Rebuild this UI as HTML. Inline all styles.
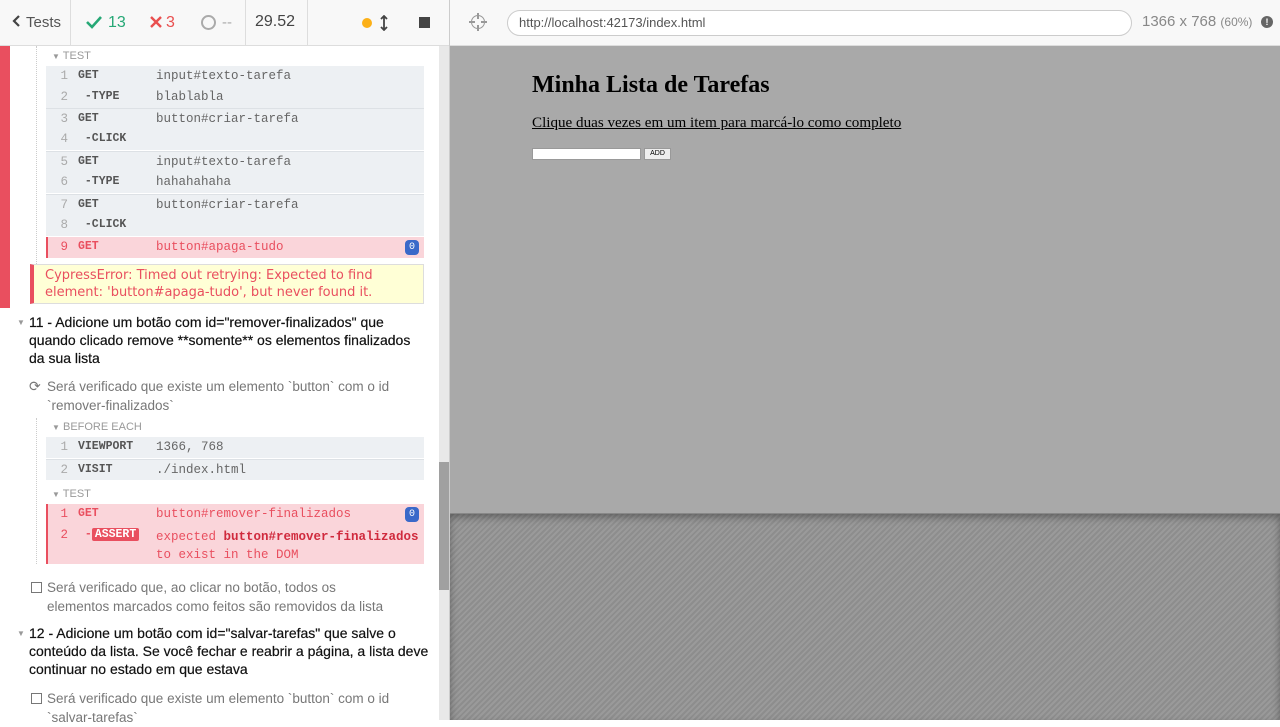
<!DOCTYPE html>
<html><head><meta charset="utf-8"><style>
*{box-sizing:border-box;margin:0;padding:0}
body{width:1280px;height:720px;overflow:hidden;font-family:"Liberation Sans",sans-serif;background:#fff;position:relative}
.abs{position:absolute}
.hdr{left:0;top:0;width:450px;height:46px;background:#f8f8f8;border-bottom:1px solid #ddd;}
.sep{position:absolute;top:0;width:1px;height:46px;background:#ddd}
.mono{font-family:"Liberation Mono","DejaVu Sans Mono",monospace;font-size:12.5px}
.row{position:absolute;left:46px;width:378px;height:21px;background:#edf0f3}
.row .n{position:absolute;left:0;width:22px;text-align:right;top:3px;color:#aaa}
.row .c{position:absolute;left:32px;top:3px;font-weight:bold;color:#555;font-size:11.5px}
.row .v{position:absolute;left:110px;top:3px;color:#666}
.bdr{border-top:1px solid #dde1e5}
.red{background:#fad5da;box-shadow:inset 2px 0 0 #e94f5f}
.red .n,.red .c,.red .v{color:#e94f5f}
.badge{position:absolute;right:5px;top:3px;width:14px;height:15px;border-radius:4px;background:#3a69c9;color:#fff;font-size:10px;text-align:center;line-height:15px}
.lbl{position:absolute;font-size:11px;color:#999}
.t{position:absolute;font-size:14px;color:#111;line-height:18px;-webkit-text-stroke:0.2px #111;white-space:nowrap}
.s{position:absolute;font-size:13.5px;color:#777;line-height:19px;white-space:nowrap}
</style></head><body>
<div class="abs hdr">
 <div class="abs" style="left:12px;top:13px;font-size:16px;color:#555"><svg width="10" height="16" viewBox="0 0 10 16"><path d="M7 3 L2 8 L7 13" stroke="#444" stroke-width="2.2" fill="none"/></svg></div>
 <div class="abs" style="left:26px;top:14px;font-size:15px;color:#555">Tests</div>
 <div class="sep" style="left:70px"></div>
 <svg class="abs" style="left:86px;top:15px" width="16" height="14" viewBox="0 0 16 14"><path d="M1 7 L6 12 L15 2" stroke="#26a876" stroke-width="2.6" fill="none"/></svg>
 <div class="abs" style="left:108px;top:14px;font-size:16px;color:#26a876">13</div>
 <svg class="abs" style="left:150px;top:16px" width="12" height="12" viewBox="0 0 12 12"><path d="M1 1 L11 11 M11 1 L1 11" stroke="#e94f4f" stroke-width="2.4"/></svg>
 <div class="abs" style="left:166px;top:14px;font-size:16px;color:#e94f4f">3</div>
 <div class="abs" style="left:201px;top:15px;width:15px;height:15px;border:2px solid #aaa;border-radius:50%"></div>
 <div class="abs" style="left:222px;top:14px;font-size:15px;color:#aaa">--</div>
 <div class="sep" style="left:245px"></div>
 <div class="abs" style="left:255px;top:13px;font-size:16px;color:#444">29.52</div>
 <div class="sep" style="left:307px"></div>
 <div class="abs" style="left:362px;top:18px;width:10px;height:10px;border-radius:50%;background:#fcb017"></div>
 <svg class="abs" style="left:380px;top:15px" width="8" height="16" viewBox="0 0 8 16"><path d="M4 1 V15 M1 4 L4 1 L7 4 M1 12 L4 15 L7 12" stroke="#444" stroke-width="1.8" fill="none"/></svg>
 <div class="abs" style="left:419px;top:17px;width:11px;height:11px;background:#444"></div>
</div>
<div class="abs" style="left:449px;top:0;width:1px;height:720px;background:#ccc"></div>
<div class="abs" style="left:0;top:46px;width:10px;height:262px;background:#e94f5f"></div>
<div class="abs" style="left:36px;top:46px;height:218px;border-left:1px dotted #ccc"></div>
<div class="lbl" style="left:52px;top:50px"><span style="font-size:8px">&#9660;</span> TEST</div>
<div class="mono">
<div class="row" style="top:66px"><span class="n">1</span><span class="c">GET</span><span class="v">input#texto-tarefa</span></div>
<div class="row" style="top:87px"><span class="n">2</span><span class="c">&nbsp;-TYPE</span><span class="v">blablabla</span></div>
<div class="row bdr" style="top:108px"><span class="n">3</span><span class="c">GET</span><span class="v">button#criar-tarefa</span></div>
<div class="row" style="top:129px"><span class="n">4</span><span class="c">&nbsp;-CLICK</span></div>
<div class="row bdr" style="top:151px"><span class="n">5</span><span class="c">GET</span><span class="v">input#texto-tarefa</span></div>
<div class="row" style="top:172px"><span class="n">6</span><span class="c">&nbsp;-TYPE</span><span class="v">hahahahaha</span></div>
<div class="row bdr" style="top:194px"><span class="n">7</span><span class="c">GET</span><span class="v">button#criar-tarefa</span></div>
<div class="row" style="top:215px"><span class="n">8</span><span class="c">&nbsp;-CLICK</span></div>
<div class="row red" style="top:237px"><span class="n">9</span><span class="c">GET</span><span class="v">button#apaga-tudo</span><span class="badge">0</span></div>
</div>
<div class="abs" style="left:30px;top:264px;width:394px;height:40px;background:#ffffd6;border:1px solid #ddd;border-left:4px solid #e94f5f;color:#e94f5f;font-size:13px;line-height:17px;padding:2px 0 0 11px;font-family:'DejaVu Sans',sans-serif">CypressError: Timed out retrying: Expected to find element: 'button#apaga-tudo', but never found it.</div>
<div class="abs" style="left:17px;top:318px;font-size:8px;color:#999">&#9660;</div>
<div class="t" style="left:29px;top:313px">11 - Adicione um botão com id="remover-finalizados" que<br>quando clicado remove **somente** os elementos finalizados<br>da sua lista</div>
<div class="abs" style="left:29px;top:378px;font-size:14px;color:#777">&#10227;</div>
<div class="s" style="left:47px;top:377px">Será verificado que existe um elemento `button` com o id<br>`remover-finalizados`</div>
<div class="abs" style="left:36px;top:418px;height:146px;border-left:1px dotted #ccc"></div>
<div class="lbl" style="left:52px;top:421px"><span style="font-size:8px">&#9660;</span> BEFORE EACH</div>
<div class="mono">
<div class="row" style="top:437px"><span class="n">1</span><span class="c">VIEWPORT</span><span class="v">1366, 768</span></div>
<div class="row bdr" style="top:459px"><span class="n">2</span><span class="c">VISIT</span><span class="v">./index.html</span></div>
<div class="row red" style="top:504px;height:60px"><span class="n">1</span><span class="c">GET</span><span class="v">button#remover-finalizados</span><span class="badge">0</span>
 <span class="n" style="top:24px">2</span><span class="c" style="top:24px">&nbsp;-<span style="background:#e94f5f;color:#fff;padding:0 3px;border-radius:2px">ASSERT</span></span><span class="v" style="top:24px;line-height:18px">expected <b style="color:#d02a3d">button#remover-finalizados</b><br>to exist in the DOM</span></div>
</div>
<div class="lbl" style="left:52px;top:488px"><span style="font-size:8px">&#9660;</span> TEST</div>
<div class="abs" style="left:31px;top:582px;width:11px;height:11px;border:1px solid #777"></div>
<div class="s" style="left:47px;top:578px">Será verificado que, ao clicar no botão, todos os<br>elementos marcados como feitos são removidos da lista</div>
<div class="abs" style="left:17px;top:629px;font-size:8px;color:#999">&#9660;</div>
<div class="t" style="left:29px;top:624px">12 - Adicione um botão com id="salvar-tarefas" que salve o<br>conteúdo da lista. Se você fechar e reabrir a página, a lista deve<br>continuar no estado em que estava</div>
<div class="abs" style="left:31px;top:693px;width:11px;height:11px;border:1px solid #777"></div>
<div class="s" style="left:47px;top:689px">Será verificado que existe um elemento `button` com o id<br>`salvar-tarefas`</div>
<div class="abs" style="left:439px;top:46px;width:10px;height:674px;background:#e8e8e8"></div>
<div class="abs" style="left:439px;top:462px;width:10px;height:128px;background:#a0a0a0"></div>
<div class="abs" style="left:450px;top:0;width:830px;height:46px;background:#f8f8f8;border-bottom:1px solid #ddd"></div>
<div class="abs" style="left:471px;top:15px;width:14px;height:14px;border:1.5px solid #999;border-radius:50%"></div>
<div class="abs" style="left:477px;top:13px;width:2px;height:18px;background:#999"></div>
<div class="abs" style="left:469px;top:21px;width:18px;height:2px;background:#999"></div>
<div class="abs" style="left:475px;top:19px;width:6px;height:6px;background:#f8f8f8"></div>
<div class="abs" style="left:507px;top:10px;width:625px;height:26px;border:1px solid #ccc;border-radius:13px;background:#fff;font-size:13px;color:#555;padding:4px 0 0 11px">http://localhost:42173/index.html</div>
<div class="abs" style="left:1142px;top:13px;font-size:15px;color:#888">1366 x 768 <span style="font-size:12px">(60%)</span></div>
<div class="abs" style="left:1261px;top:16px;width:12px;height:12px;border-radius:50%;background:#666;color:#fff;font-size:9px;text-align:center;line-height:12px;font-weight:bold">!</div>
<div class="abs" style="left:450px;top:46px;width:830px;height:467px;background:#a9a9a9"></div>
<div class="abs" style="left:450px;top:513px;width:830px;height:207px;background:repeating-linear-gradient(135deg,#9a9a9a 0 2px,#8d8d8d 2px 4px);box-shadow:inset 0 4px 8px rgba(0,0,0,.35)"></div>
<div class="abs" style="left:450px;top:513px;width:830px;height:1px;background:#888"></div>
<div class="abs" style="left:532px;top:72px;font-family:'Liberation Serif',serif;font-size:24px;font-weight:bold;color:#000">Minha Lista de Tarefas</div>
<div class="abs" style="left:532px;top:115px;font-family:'Liberation Serif',serif;font-size:15.1px;color:#000;text-decoration:underline">Clique duas vezes em um item para marcá-lo como completo</div>
<div class="abs" style="left:532px;top:148px;width:109px;height:12px;background:#fff;border:1px solid #999"></div>
<div class="abs" style="left:644px;top:148px;width:27px;height:12px;background:#eee;border:1px solid #999;font-size:7px;text-align:center;line-height:10px">ADD</div>
</body></html>
